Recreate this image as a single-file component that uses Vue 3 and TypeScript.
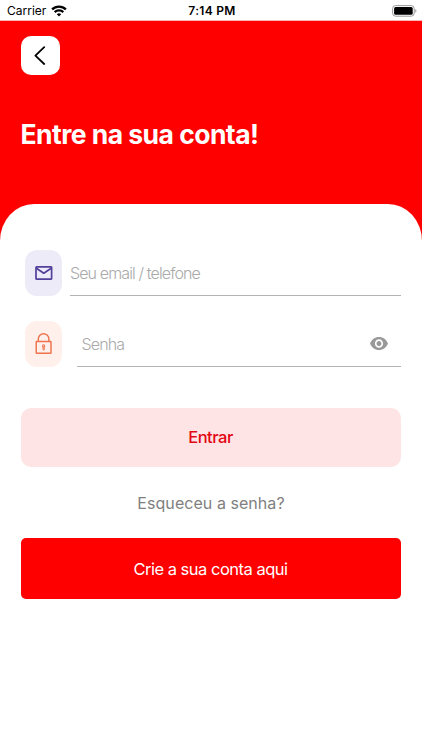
<script setup lang="ts">
import { ref } from 'vue'

const login = ref('')
const password = ref('')
const passwordVisible = ref(false)
</script>

<template>
  <div class="screen">
    <div class="status-bar">
      <div class="carrier">
        <span class="carrier-name">Carrier</span>
        <svg class="wifi" width="16" height="12" viewBox="0 0 16 12" fill="none" stroke="#000" stroke-width="2.3">
          <path d="M1.1 4.4a9.8 9.8 0 0 1 13.8 0" />
          <path d="M3.7 7.1a6.1 6.1 0 0 1 8.6 0" />
          <path d="M8 11.6 5.8 9.3a3.1 3.1 0 0 1 4.4 0z" fill="#000" stroke="none" />
        </svg>
      </div>
      <span class="clock">7:14 PM</span>
      <svg class="battery" width="25" height="12" viewBox="0 0 25 12">
        <rect x="0.6" y="0.6" width="21.6" height="10.6" rx="3" fill="#fff" stroke="#999" />
        <rect x="2.1" y="2.1" width="18.6" height="7.6" rx="1.5" fill="#000" />
        <path d="M23.4 4.1c1.3.5 1.3 3.1 0 3.6z" fill="#888" />
      </svg>
    </div>

    <header class="hero">
      <button class="back" type="button" aria-label="Voltar">
        <svg width="12" height="20" viewBox="0 0 12 20" fill="none" stroke="#000" stroke-width="1.8" stroke-linecap="round" stroke-linejoin="round">
          <path d="M10.2 1.2 1.4 9.6l8.8 8.4" />
        </svg>
      </button>
      <h1 class="title">Entre na sua conta!</h1>
    </header>

    <form class="sheet" @submit.prevent>
      <div class="field">
        <span class="badge badge-mail">
          <svg width="18" height="15" viewBox="0 0 18 15" fill="none" stroke="#52409a" stroke-width="1.7" stroke-linejoin="round">
            <rect x="1" y="0.8" width="15.6" height="12.4" rx="0.8" />
            <path d="m1.4 2.2 7.4 5 7.4-5" />
          </svg>
        </span>
        <div class="line line-login">
          <input v-model="login" class="input input-login" type="text" placeholder="Seu email / telefone" />
        </div>
      </div>

      <div class="field">
        <span class="badge badge-lock">
          <svg width="18" height="22" viewBox="0 0 18 22" fill="none" stroke="#ee734c" stroke-width="1.45">
            <rect x="1.2" y="8.4" width="14.8" height="11.8" rx="0.5" />
            <path d="M3.3 8.4V6.1a5.3 5.3 0 0 1 10.6 0v2.3" />
            <circle cx="8.6" cy="12.9" r="1.1" stroke-width="1.1" />
            <path d="M8 13.9v3h1.2v-3" stroke-width="1" />
          </svg>
        </span>
        <div class="line line-password">
          <input v-model="password" class="input input-password" :type="passwordVisible ? 'text' : 'password'" placeholder="Senha" />
          <button class="eye" type="button" aria-label="Mostrar senha" @click="passwordVisible = !passwordVisible">
            <svg width="18" height="13" viewBox="1 4.5 22 15" preserveAspectRatio="none" fill="#999">
              <path d="M12 4.5C7 4.5 2.73 7.61 1 12c1.73 4.39 6 7.5 11 7.5s9.27-3.11 11-7.5c-1.73-4.39-6-7.5-11-7.5zM12 17c-2.76 0-5-2.24-5-5s2.24-5 5-5 5 2.24 5 5-2.24 5-5 5zm0-8c-1.66 0-3 1.34-3 3s1.34 3 3 3 3-1.34 3-3-1.34-3-3-3z" />
            </svg>
          </button>
        </div>
      </div>

      <button class="button submit" type="submit">Entrar</button>
      <a class="forgot">Esqueceu a senha?</a>
      <button class="button register" type="button">Crie a sua conta aqui</button>
    </form>
  </div>
</template>

<style>
body {
  margin: 0;
  background: #fff;
}
</style>

<style scoped>
.screen {
  display: flex;
  flex-direction: column;
  height: 750px;
  overflow: hidden;
  background: #f00;
  font-family: Inter, "Liberation Sans", sans-serif;
}

.status-bar {
  display: grid;
  grid-template-columns: 1fr auto 1fr;
  align-items: center;
  box-sizing: border-box;
  height: 21px;
  padding: 1px 5px 0 7px;
  background: #fff;
  border-bottom: 1px solid #ffb4b4;
  color: #000;
}

.carrier {
  display: flex;
  align-items: center;
  gap: 5px;
}

.carrier-name {
  font-size: 12px;
}

.clock {
  font-size: 12px;
  font-weight: 600;
  letter-spacing: 0.3px;
}

.battery {
  justify-self: end;
}

.hero {
  box-sizing: border-box;
  height: 183px;
  padding: 15px 20.5px 0;
}

.back {
  display: flex;
  align-items: center;
  justify-content: center;
  width: 39px;
  height: 39px;
  padding: 0;
  border: 0;
  border-radius: 10px;
  background: #fff;
}

.title {
  margin: 43px 0 0;
  color: #fff;
  font-size: 26.5px;
  font-weight: 650;
  line-height: 32px;
  letter-spacing: -0.54px;
  white-space: nowrap;
}

.sheet {
  display: flex;
  flex: 1;
  flex-direction: column;
  padding: 46px 21px 0;
  border-radius: 34px 34px 0 0 / 37px 37px 0 0;
  background: #fff;
}

.field {
  display: flex;
  height: 46px;
  margin: 0 0 25px 4px;
}

.badge {
  display: flex;
  align-items: center;
  justify-content: center;
  width: 37px;
  border-radius: 12px;
}

.badge-mail {
  background: #eeebf8;
}

.badge-lock {
  background: #fff0eb;
}

.line {
  display: flex;
  flex: 1;
  align-items: center;
  box-sizing: border-box;
  border-bottom: 1px solid #b4b4b4;
}

.line-login {
  margin-left: 8px;
}

.line-password {
  margin-left: 15px;
  padding: 0 13px 0 4.5px;
}

.input {
  flex: 1;
  min-width: 0;
  height: 30px;
  padding: 0;
  border: 0;
  outline: 0;
  background: transparent;
  color: #333;
  font-family: inherit;
  font-size: 16px;
  font-weight: 300;
}

.input-login {
  letter-spacing: -0.88px;
}

.input-password {
  letter-spacing: -0.85px;
}

.input::placeholder {
  color: #aaa;
  opacity: 1;
}

.eye {
  display: flex;
  padding: 0;
  border: 0;
  background: transparent;
}

.button {
  display: flex;
  align-items: center;
  justify-content: center;
  padding: 0;
  border: 0;
  font-family: inherit;
  font-size: 16.5px;
}

.submit {
  height: 59px;
  margin-top: 16px;
  padding: 0 1px 1px 0;
  border-radius: 10px;
  background: #ffe4e5;
  color: #e30613;
  font-weight: 450;
  letter-spacing: -0.5px;
}

.forgot {
  display: flex;
  justify-content: center;
  margin-top: 26px;
  color: #808080;
  font-size: 16px;
  line-height: 20px;
  letter-spacing: 0.05px;
}

.register {
  height: 61px;
  margin-top: 25px;
  padding-right: 1px;
  border-radius: 5px;
  background: #f00;
  color: #fff;
  letter-spacing: -0.5px;
}
</style>
